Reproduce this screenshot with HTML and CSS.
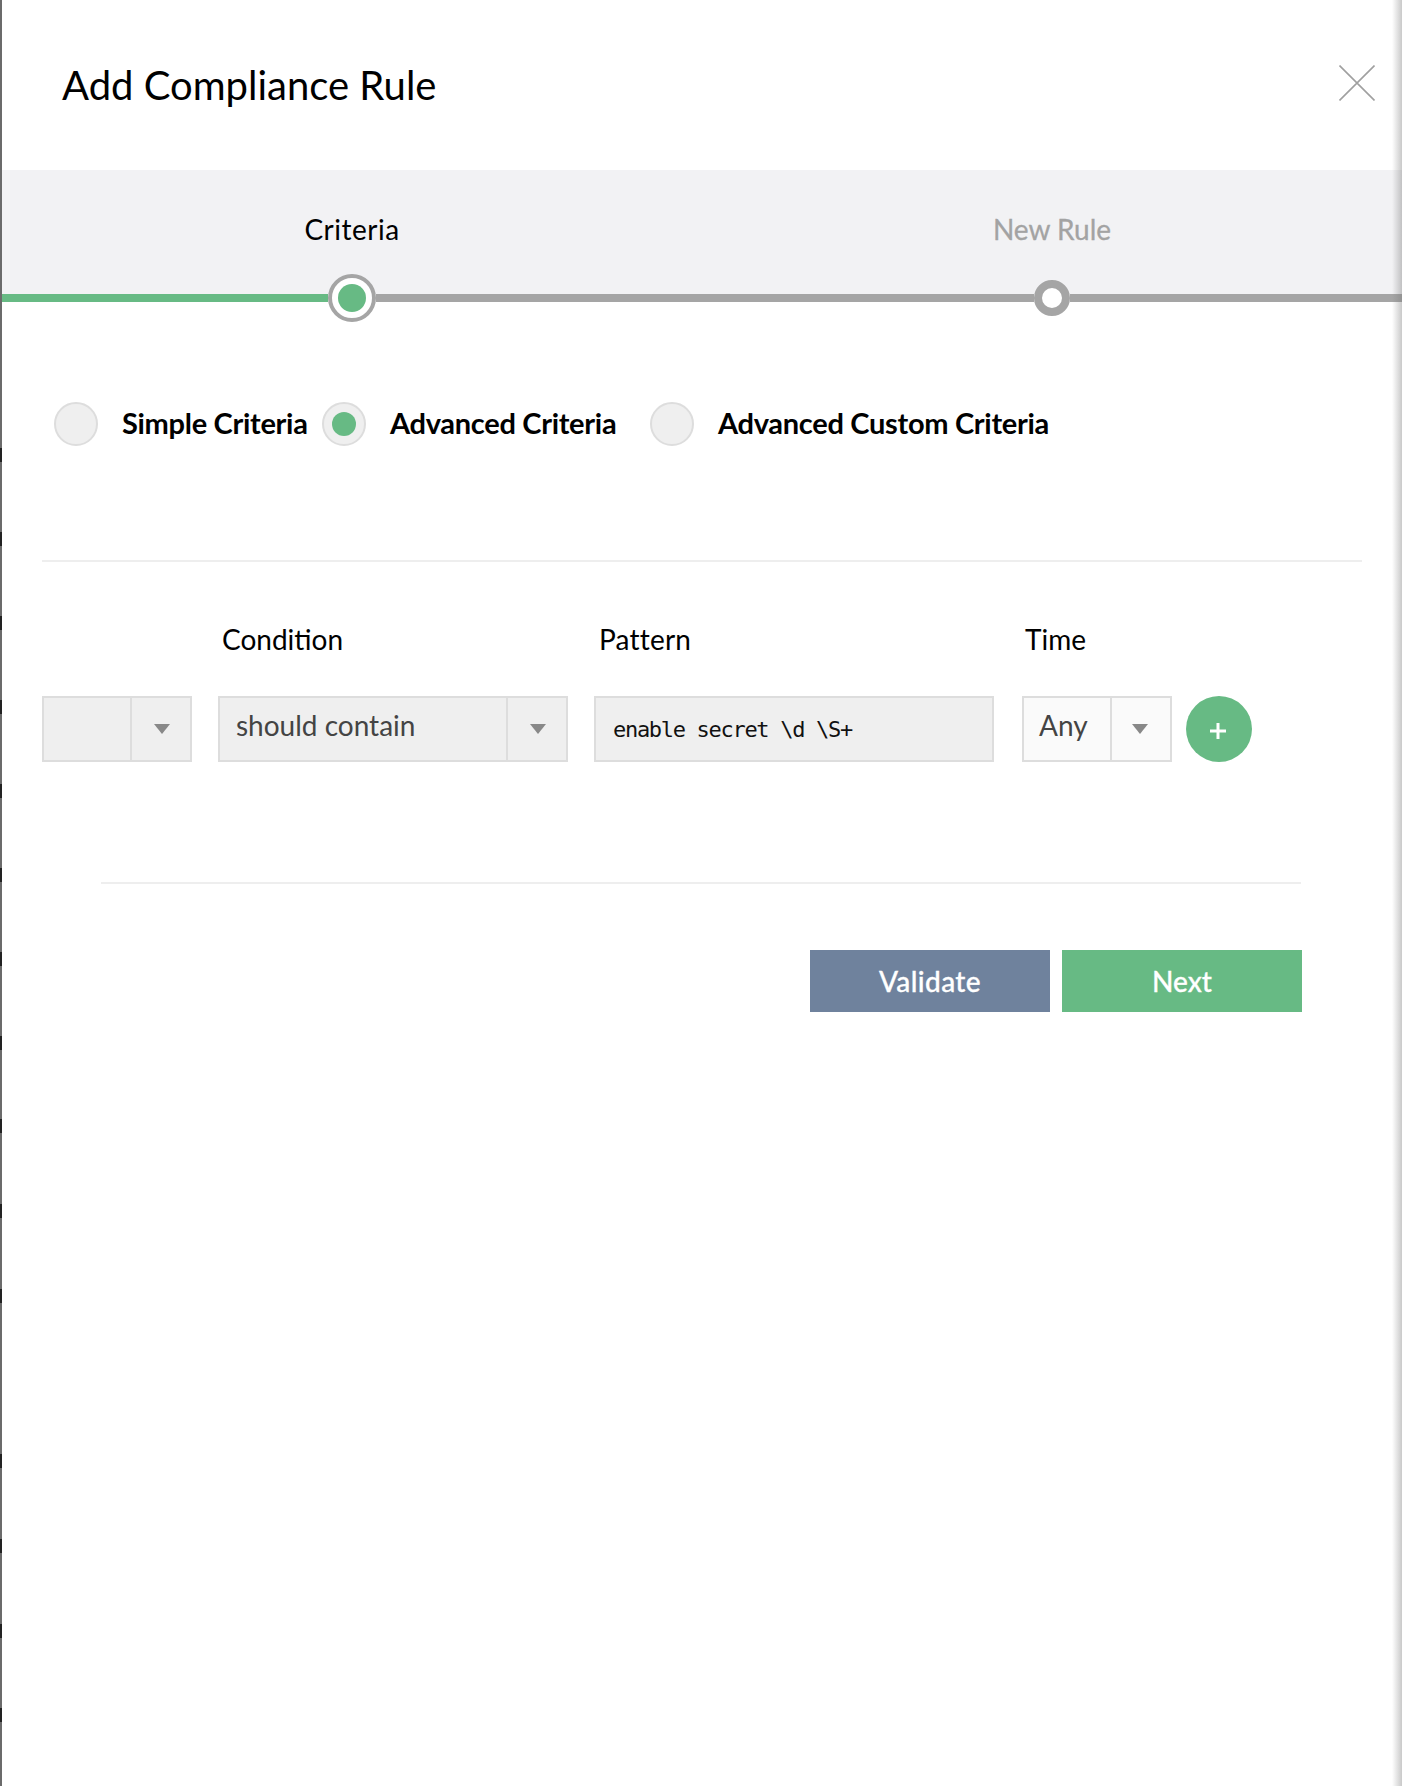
FILE: index.html
```html
<!DOCTYPE html>
<html lang="en">
<head>
<meta charset="utf-8">
<title>Add Compliance Rule</title>
<link rel="stylesheet" href="styles.css">
</head>
<body>
<div class="backdrop-edge"></div>
<main class="modal">
  <header class="modal-header">
    <h1 class="modal-title">Add Compliance Rule</h1>
    <svg class="close-icon" viewBox="0 0 36 36" aria-label="Close"><path d="M0.5 0.5L35.5 35.5M35.5 0.5L0.5 35.5"/></svg>
  </header>
  <section class="stepper">
    <div class="step-labels">
      <span class="step-label step-label-active">Criteria</span>
      <span class="step-label step-label-next">New Rule</span>
    </div>
    <div class="step-track">
      <div class="track-done"></div>
      <div class="step-dot-active"><span class="step-dot-core"></span></div>
      <div class="track-part track-mid"></div>
      <div class="step-dot-next"></div>
      <div class="track-part track-end"></div>
    </div>
  </section>
  <section class="criteria-types">
    <span class="radio"></span><span class="radio-label label-simple">Simple Criteria</span>
    <span class="radio"><span class="radio-core"></span></span><span class="radio-label label-advanced">Advanced Criteria</span>
    <span class="radio"></span><span class="radio-label">Advanced Custom Criteria</span>
  </section>
  <hr class="rule rule-wide">
  <section class="conditions">
    <div class="field field-first">
      <div class="field-label"></div>
      <div class="select select-first"><span class="select-value"></span><span class="select-arrow"><i class="arrow"></i></span></div>
    </div>
    <div class="field field-condition">
      <div class="field-label">Condition</div>
      <div class="select select-condition"><span class="select-value">should contain</span><span class="select-arrow"><i class="arrow"></i></span></div>
    </div>
    <div class="field field-pattern">
      <div class="field-label">Pattern</div>
      <div class="pattern-input">enable secret \d \S+</div>
    </div>
    <div class="field field-time">
      <div class="field-label">Time</div>
      <div class="select select-time"><span class="select-value">Any</span><span class="select-arrow"><i class="arrow"></i></span></div>
    </div>
    <button class="add-btn" type="button"><svg class="plus" viewBox="0 0 18 18"><path d="M9 1V17M1 9H17"/></svg></button>
  </section>
  <hr class="rule rule-narrow">
  <section class="actions">
    <button class="btn btn-validate" type="button">Validate</button>
    <button class="btn btn-next" type="button">Next</button>
  </section>
</main>
<div class="shadow-edge"></div>
</body>
</html>
```
FILE: styles.css
```css
* { box-sizing: border-box; }
html, body { margin: 0; padding: 0; }
body {
  width: 1402px;
  height: 1786px;
  display: flex;
  overflow: hidden;
  position: relative;
  background: #fff;
  font-family: Lato, "Liberation Sans", sans-serif;
  color: #000;
}
.backdrop-edge {
  width: 2px;
  flex: none;
  background-color: #6b6b6b;
  background-image:
    linear-gradient(#222,#222), linear-gradient(#222,#222), linear-gradient(#222,#222),
    linear-gradient(#222,#222), linear-gradient(#222,#222), linear-gradient(#222,#222),
    linear-gradient(#222,#222), linear-gradient(#222,#222), linear-gradient(#222,#222),
    linear-gradient(#222,#222), linear-gradient(#222,#222), linear-gradient(#222,#222),
    linear-gradient(#222,#222), linear-gradient(#222,#222), linear-gradient(#222,#222);
  background-repeat: no-repeat;
  background-size: 2px 14px;
  background-position:
    0 448px, 0 532px, 0 616px, 0 700px, 0 784px, 0 868px, 0 952px, 0 1036px,
    0 1119px, 0 1204px, 0 1289px, 0 1454px, 0 1539px, 0 1624px, 0 1708px;
}
.modal { flex: 1; min-width: 0; }
.modal-header {
  height: 170px;
  display: flex;
  justify-content: space-between;
  padding: 59px 27px 0 60px;
}
.modal-title {
  margin: 0;
  font-size: 40px;
  line-height: 52px;
  font-weight: 400;
}
.close-icon {
  width: 36px;
  height: 36px;
  margin-top: 6px;
  fill: none;
  stroke: #a0a0a0;
  stroke-width: 1.6;
}
.stepper { height: 152px; position: relative; }
.step-labels {
  height: 124px;
  background: #f2f2f4;
  display: flex;
  padding-top: 41px;
}
.step-label {
  font-size: 28px;
  line-height: 36px;
  width: 700px;
  text-align: center;
}
.step-label-active { letter-spacing: 0.5px; }
.step-label-next { color: #a3a3a3; -webkit-text-stroke: 0.3px #a3a3a3; }
.step-track {
  position: absolute;
  left: 0;
  right: 0;
  top: 104px;
  height: 48px;
  display: flex;
  align-items: center;
}
.track-done { height: 8px; width: 326px; background: #67ba84; flex: none; }
.track-part { height: 8px; background: #a5a5a5; }
.track-mid { width: 658px; flex: none; }
.track-end { flex: 1; }
.step-dot-active {
  width: 48px;
  height: 48px;
  flex: none;
  border-radius: 50%;
  border: 4px solid #a5a5a5;
  background: #fff;
  display: flex;
  align-items: center;
  justify-content: center;
}
.step-dot-core { width: 28px; height: 28px; border-radius: 50%; background: #67ba84; }
.step-dot-next {
  width: 36px;
  height: 36px;
  flex: none;
  border-radius: 50%;
  border: 8px solid #a5a5a5;
  background: #fff;
}
.criteria-types {
  display: flex;
  align-items: flex-start;
  padding: 80px 0 0 52px;
  height: 238px;
}
.radio {
  width: 44px;
  height: 44px;
  flex: none;
  border-radius: 50%;
  border: 2px solid #ddd;
  background: #efefef;
  display: flex;
  align-items: center;
  justify-content: center;
}
.radio-core { width: 24px; height: 24px; border-radius: 50%; background: #67ba84; }
.radio-label {
  margin-left: 24px;
  font-size: 29px;
  font-weight: 700;
  line-height: 42px;
  letter-spacing: -0.3px;
}
.label-simple { width: 200px; }
.label-advanced { width: 260px; }
.rule { border: 0; height: 2px; background: #eee; margin: 0; }
.rule-wide { margin: 0 40px; }
.rule-narrow { margin: 120px 101px 0 99px; }
.conditions {
  display: flex;
  align-items: flex-end;
  padding: 59px 0 0 40px;
}
.field-label { font-size: 28px; line-height: 36px; height: 36px; margin-bottom: 39px; }
.field-first { width: 176px; }
.field-condition { width: 376px; }
.field-condition .field-label { padding-left: 4px; }
.field-pattern { width: 428px; }
.field-pattern .field-label { padding-left: 5px; letter-spacing: 0.2px; }
.field-time { width: 164px; }
.field-time .field-label { padding-left: 3px; }
.select {
  height: 66px;
  display: flex;
  border: 2px solid #ddd;
  background: #efefef;
}
.select-first { width: 150px; }
.select-condition { width: 350px; }
.select-time { width: 150px; background: #fafafa; }
.select-value {
  flex: 1;
  padding-left: 16px;
  font-size: 28px;
  line-height: 54px;
  color: #444;
  border-right: 2px solid #ddd;
}
.select-time .select-value { padding-left: 15px; }
.select-arrow {
  width: 58px;
  flex: none;
  display: flex;
  align-items: center;
  justify-content: center;
  padding-left: 2px;
}
.select-time .select-arrow { padding-left: 0; padding-right: 2px; }
.arrow {
  width: 0;
  height: 0;
  border-left: 8px solid transparent;
  border-right: 8px solid transparent;
  border-top: 10px solid #888;
}
.pattern-input {
  width: 400px;
  height: 66px;
  border: 2px solid #ddd;
  background: #efefef;
  padding-left: 17px;
  font-family: "DejaVu Sans Mono", monospace;
  font-size: 22px;
  letter-spacing: -1.3px;
  line-height: 64px;
  color: #111;
}
.add-btn {
  width: 66px;
  height: 66px;
  padding: 0 2px 0 0;
  border: 0;
  border-radius: 50%;
  background: #67ba84;
  display: flex;
  align-items: center;
  justify-content: center;
}
.plus { width: 18px; height: 18px; fill: none; stroke: #fff; stroke-width: 3; margin-top: 3px; }
.actions {
  display: flex;
  justify-content: flex-end;
  gap: 12px;
  padding: 66px 100px 0 0;
}
.btn {
  width: 240px;
  height: 62px;
  border: 0;
  padding: 0;
  color: #fff;
  font-family: Lato, "Liberation Sans", sans-serif;
  font-size: 28px;
  font-weight: 500;
  -webkit-text-stroke: 0.3px #fff;
}
.btn-validate { background: #6f829d; letter-spacing: 0.4px; }
.btn-next { background: #67ba84; }
.shadow-edge {
  position: absolute;
  top: 0;
  right: 0;
  bottom: 0;
  width: 10px;
  background: linear-gradient(to right, rgba(120,120,120,0), rgba(120,120,120,0.4));
}
```
